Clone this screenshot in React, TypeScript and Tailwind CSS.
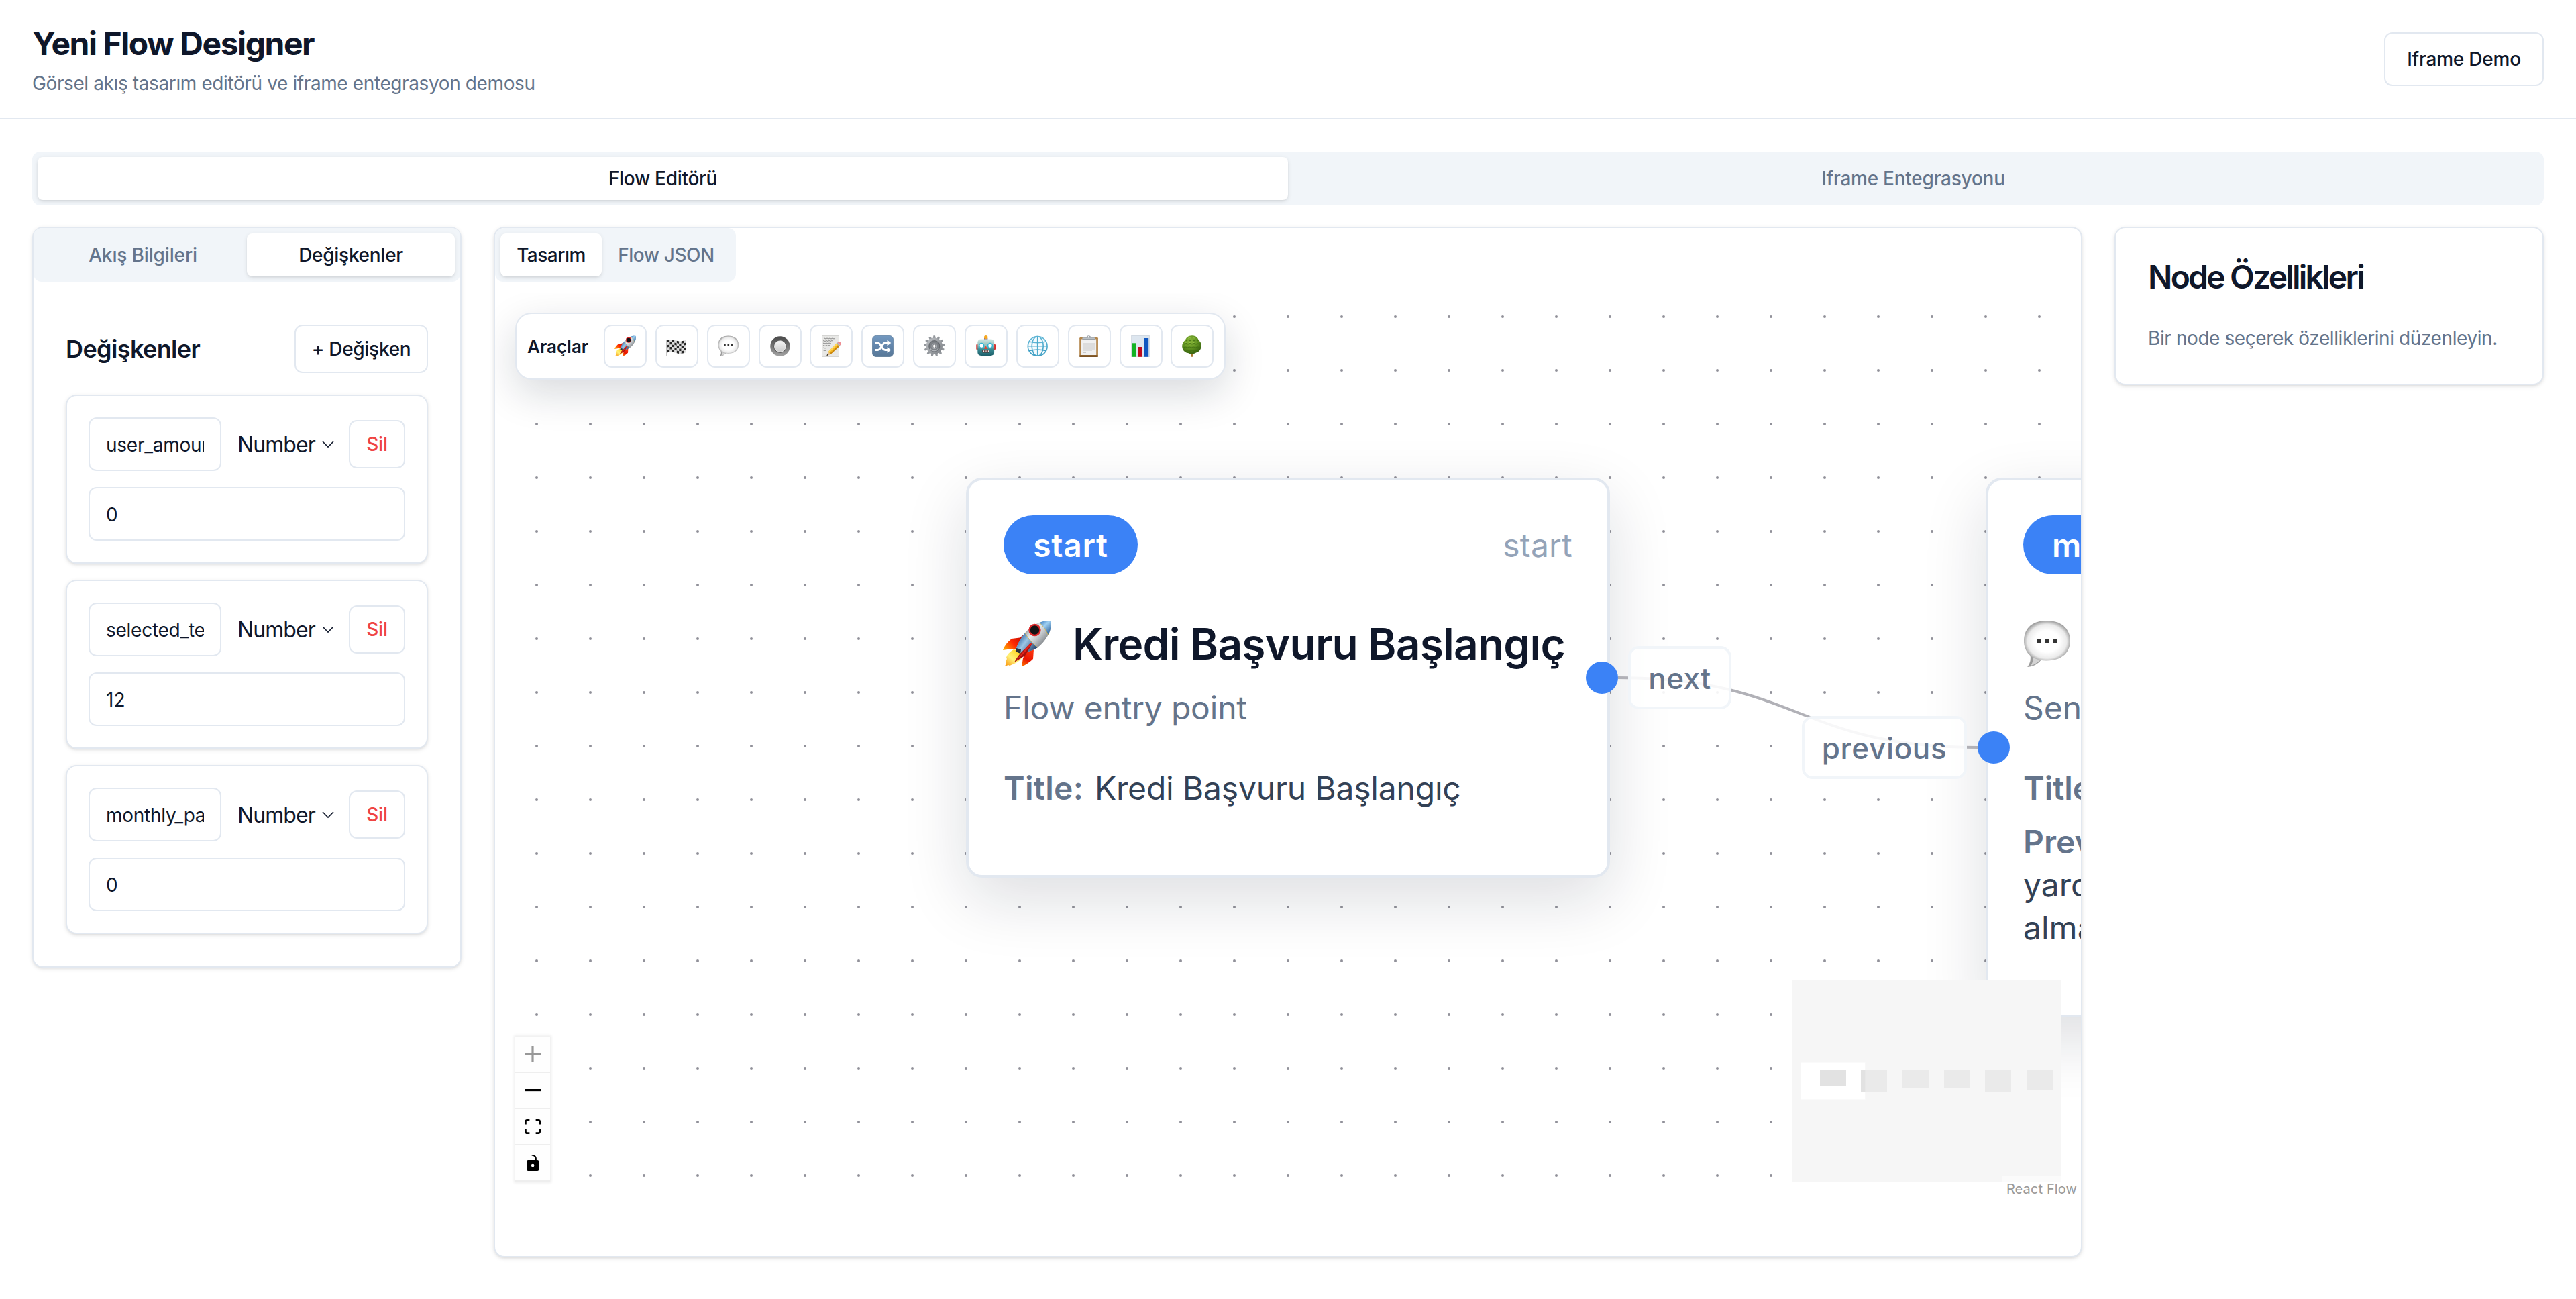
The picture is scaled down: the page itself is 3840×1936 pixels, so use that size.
import type { ReactNode } from "react";

/* ---------- Emoji-style glyphs ---------- */

function Rocket({ className, id }: { className: string; id: string }) {
  return (
    <svg viewBox="0 0 72 72" className={className}>
      <defs>
        <linearGradient id={id + "b"} x1="28" y1="18" x2="58" y2="44" gradientUnits="userSpaceOnUse">
          <stop offset="0" stopColor="#7d8790" />
          <stop offset=".35" stopColor="#e9ecee" />
          <stop offset=".6" stopColor="#c3c8cc" />
          <stop offset="1" stopColor="#6f7478" />
        </linearGradient>
        <linearGradient id={id + "n"} x1="56" y1="2" x2="72" y2="18" gradientUnits="userSpaceOnUse">
          <stop offset="0" stopColor="#3f7fc0" />
          <stop offset=".4" stopColor="#9fd0f2" />
          <stop offset="1" stopColor="#2b5f9a" />
        </linearGradient>
        <linearGradient id={id + "t"} x1="24" y1="30" x2="46" y2="46" gradientUnits="userSpaceOnUse">
          <stop offset="0" stopColor="#4c7db1" />
          <stop offset=".35" stopColor="#9cc6e6" />
          <stop offset="1" stopColor="#2f4f78" />
        </linearGradient>
        <linearGradient id={id + "l"} x1="28" y1="24" x2="2" y2="46" gradientUnits="userSpaceOnUse">
          <stop offset="0" stopColor="#c10800" />
          <stop offset=".5" stopColor="#ff2a00" />
          <stop offset="1" stopColor="#ffb000" />
        </linearGradient>
        <linearGradient id={id + "r"} x1="46" y1="44" x2="30" y2="70" gradientUnits="userSpaceOnUse">
          <stop offset="0" stopColor="#ff3a10" />
          <stop offset=".6" stopColor="#e81400" />
          <stop offset="1" stopColor="#ff7a00" />
        </linearGradient>
        <linearGradient id={id + "f"} x1="24" y1="46" x2="4" y2="70" gradientUnits="userSpaceOnUse">
          <stop offset="0" stopColor="#ffd21c" />
          <stop offset=".5" stopColor="#fff27a" />
          <stop offset="1" stopColor="#f98b00" />
        </linearGradient>
      </defs>
      <path d="M31 22 25 26.500 13 28Q3 36 0 45L13 43 21 43.500 26 36Z" fill={`url(#${id}l)`} />
      <path d="M46 44 45 58Q38 65 28 69.500L30 57 34 48Z" fill={`url(#${id}r)`} />
      <path d="M16 44Q6 50 5 56L6 58 4 61 5 64 3 69 8 67 10 68 17 65Q27 61 29 54L27 47Z" fill={`url(#${id}f)`} />
      <path d="M64 1.200Q70.500 .5 72 2.500 73 14 66 25 60 35 52 41 40 48 27 49L19.500 43Q24 31 31 22 43 5 64 1.200Z" fill={`url(#${id}b)`} />
      <path d="M33 19.500Q39 30 51.500 41.500 40 48 27 49L19.500 43Q24 30 33 19.500Z" fill={`url(#${id}t)`} />
      <path d="M64 1.200Q70.500 .5 72 2.500 72.500 13 67.500 22 62 10 54.500 4 59 2 64 1.200Z" fill={`url(#${id}n)`} />
      <path d="M54.500 4Q62 10 67.500 22M33 19.500Q39 30 51.500 41.500" fill="none" stroke="#d8b23a" strokeWidth=".8" />
      <circle cx="47.500" cy="15" r="8" fill="#151315" stroke="#dd282a" strokeWidth="2.400" />
      <path d="M20 42 27 44 26 50 19 47Z" fill="#2c3038" />
      <path d="M41 34.500 43.500 36 33 53 17 63Q23 51 33 43Z" fill="#a3120c" />
      <path d="M41 34.500 43.500 36 31 50 17 63Z" fill="#e3231a" />
    </svg>
  );
}

function Bubble({ className, id }: { className: string; id: string }) {
  return (
    <svg viewBox="0 0 72 72" className={className}>
      <defs>
        <radialGradient id={id} cx=".5" cy=".52" r=".53">
          <stop offset=".5" stopColor="#ffffff" />
          <stop offset=".8" stopColor="#ebebeb" />
          <stop offset="1" stopColor="#979797" />
        </radialGradient>
      </defs>
      <path d="M10 50Q13 62 6 70 20 69 28 58Z" fill="#9a9a9a" />
      <path d="M14 52Q16 62 11 68 20 66 29 56Z" fill="#d4d4d4" />
      <path d="M35 1C60 1 70 16 70 31S60 60.500 35 60.500 1 46 1 31 10 1 35 1Z" fill={`url(#${id})`} />
      <g fill="#333333">
        <circle cx="23.500" cy="31.500" r="3.300" />
        <circle cx="35.500" cy="31.500" r="3.300" />
        <circle cx="47.500" cy="31.500" r="3.300" />
      </g>
    </svg>
  );
}

const wave = (x: number) => Math.sin((x / 28) * Math.PI * 2) * 1.3;
const FLAG_CELLS = Array.from({ length: 40 }, (_, i) => {
  const c = i % 8;
  const r = Math.floor(i / 8);
  const x0 = 2 + c * 3.45;
  const x1 = x0 + 3.45;
  const y = 7.2 + r * 3.7;
  const a = y - wave(x0);
  const b = y - wave(x1);
  return { points: `${x0},${a} ${x1},${b} ${x1},${b + 3.7} ${x0},${a + 3.7}`, dark: (c + r) % 2 === 0 };
});

function Flag() {
  return (
    <svg viewBox="0 0 32 32" className="size-8">
      <path d="M1 6V30.500" stroke="#a8a8a8" strokeWidth="1.300" />
      {FLAG_CELLS.map((cell) => (
        <polygon key={cell.points} points={cell.points} fill={cell.dark ? "#262626" : "#dcdcdc"} />
      ))}
    </svg>
  );
}

function RadioGlyph() {
  return (
    <svg viewBox="0 0 32 32" className="size-8">
      <defs>
        <linearGradient id="radio-o" x1="0" y1="0" x2="0" y2="1">
          <stop offset="0" stopColor="#474747" />
          <stop offset="1" stopColor="#a3a3a3" />
        </linearGradient>
        <linearGradient id="radio-i" x1="0" y1="0" x2="0" y2="1">
          <stop offset="0" stopColor="#f4f4f4" />
          <stop offset="1" stopColor="#c9c9c9" />
        </linearGradient>
      </defs>
      <circle cx="15.900" cy="16" r="14.700" fill="url(#radio-o)" />
      <circle cx="15.900" cy="16.200" r="9.700" fill="#5c5c5c" />
      <circle cx="15.900" cy="16.200" r="8.300" fill="url(#radio-i)" stroke="#f3f3f3" strokeWidth="1" />
    </svg>
  );
}

function Memo() {
  return (
    <svg viewBox="0 0 32 32" className="size-8">
      <rect x="2" y="0" width="26" height="32" fill="#e8e8e6" />
      <rect x="2.300" y=".3" width="25.400" height="31.400" fill="none" stroke="#c9c9c7" strokeWidth=".6" />
      <path d="M5 4.500q1-1 2 0t2 0 2 0 2 0 2 0 2 0 2 0 2 0M4 8q1-1 2 0t2 0 2 0 2 0 2 0 2 0 2 0M4 11.500q1-1 2 0t2 0 2 0 2 0 2 0 2 0M4 15q1-1 2 0t2 0 2 0 2 0 2 0M4 18.500q1-1 2 0t2 0M4 22q1-1 2 0t2 0" fill="none" stroke="#7d7d7d" strokeWidth=".9" />
      <path d="M9.300 30.200 11.800 24 15.200 27.900Z" fill="#e6c08c" />
      <path d="M9.300 30.200 10.300 27.600 11.800 29.300Z" fill="#333" />
      <path d="M11.800 24 24 11.500 28.300 15.900 15.200 27.900Z" fill="#f3b51f" />
      <path d="M11.800 24 24 11.500 25.500 13 13 25.400Z" fill="#ffd75a" />
      <path d="M14.100 26.700 27 14.500 28.300 15.900 15.200 27.900Z" fill="#c78410" />
      <path d="M24 11.500 25.500 10.200 29.500 14.600 28.300 15.900Z" fill="#a9aeb2" />
      <path d="M25.500 10.200Q28 8 30 10.300T29.500 14.600Z" fill="#ee8d93" />
    </svg>
  );
}

function ShuffleGlyph() {
  return (
    <svg viewBox="0 0 32 32" className="size-8">
      <defs>
        <linearGradient id="shuf" x1="0" y1="0" x2="0" y2="1">
          <stop offset="0" stopColor="#7399c0" />
          <stop offset=".5" stopColor="#6285ab" />
          <stop offset="1" stopColor="#587897" />
        </linearGradient>
      </defs>
      <rect x=".3" y=".3" width="31.400" height="31.400" rx="6" fill="url(#shuf)" stroke="#4f7091" strokeWidth=".6" />
      <g fill="none" stroke="#fff" strokeWidth="2.800">
        <path d="M4.500 11H8.500C13.500 11 14.500 21.500 19.500 21.500H23" />
        <path d="M4.500 21.500H8.500C13.500 21.500 14.500 11 19.500 11H23" />
      </g>
      <path d="M22.500 6.700 28.300 11 22.500 15.300ZM22.500 17.200 28.300 21.500 22.500 25.800Z" fill="#fff" />
    </svg>
  );
}

const TEETH = Array.from({ length: 13 }, (_, i) => (i * 360) / 13);

function Gear() {
  return (
    <svg viewBox="0 0 32 32" className="size-8">
      <defs>
        <linearGradient id="gear" x1="0" y1="0" x2="1" y2="1">
          <stop offset="0" stopColor="#bfc2c6" />
          <stop offset="1" stopColor="#7c8085" />
        </linearGradient>
      </defs>
      {TEETH.map((a) => (
        <path key={a} d="M13.800 4.500 14.400 .3H17L17.800 4.500Z" fill="#92969b" transform={`rotate(${a} 15.800 15.700)`} />
      ))}
      <circle cx="15.800" cy="15.700" r="12.200" fill="url(#gear)" />
      <circle cx="15.800" cy="15.700" r="8" fill="#7d8186" stroke="#65696e" strokeWidth="1.200" />
      <path d="M9.500 19A7 7 0 0 0 22 19" fill="none" stroke="#aeb2b7" strokeWidth="1.500" />
      <circle cx="15.800" cy="15.700" r="4.300" fill="#a9adb3" />
      <ellipse cx="15.800" cy="15.700" rx="2.200" ry="2.900" fill="#fff" stroke="#5d6166" strokeWidth=".8" />
    </svg>
  );
}

function Robot() {
  return (
    <svg viewBox="0 0 32 32" className="size-8">
      <defs>
        <linearGradient id="bot" x1="0" y1="0" x2="0" y2="1">
          <stop offset="0" stopColor="#d3e8e3" />
          <stop offset=".4" stopColor="#8bbdbb" />
          <stop offset=".62" stopColor="#3a8a92" />
          <stop offset="1" stopColor="#1c5f6a" />
        </linearGradient>
      </defs>
      <rect x="1.300" y="13" width="3" height="8" rx="1" fill="#d9302c" />
      <rect x="27" y="13" width="3" height="8" rx="1" fill="#d9302c" />
      <rect x="13" y="3.800" width="5.400" height="3" rx="1" fill="#5b4a9c" />
      <circle cx="15.700" cy="2.800" r="2.700" fill="#f6a821" />
      <rect x="3.300" y="5.400" width="24.800" height="24.600" rx="5" fill="url(#bot)" />
      <circle cx="9.200" cy="15" r="3.400" fill="#fff" stroke="#2fb6d4" strokeWidth="1.500" />
      <circle cx="22" cy="15" r="3.400" fill="#fff" stroke="#2fb6d4" strokeWidth="1.500" />
      <path d="M15.600 15.500 18 20H13.200Z" fill="#e8412f" />
      <rect x="10.300" y="21.600" width="10.800" height="3.800" rx="1" fill="#5a2a28" />
      <path d="M11.200 22.200h1.800v2.600h-1.800zM13.800 22.200h1.800v2.600h-1.800zM16.400 22.200h1.800v2.600h-1.800zM19 22.200h1.400v2.600H19z" fill="#f2f2f2" />
    </svg>
  );
}

function Globe() {
  return (
    <svg viewBox="0 0 32 32" className="size-8">
      <defs>
        <linearGradient id="globe" x1="0" y1="0" x2="0" y2="1">
          <stop offset="0" stopColor="#5fb6d6" />
          <stop offset="1" stopColor="#3f9fc4" />
        </linearGradient>
      </defs>
      <g fill="none" stroke="url(#globe)" strokeWidth="1.600">
        <circle cx="15.700" cy="15.900" r="14.400" fill="#f4fbfe" />
        <ellipse cx="15.700" cy="15.900" rx="8.500" ry="14.400" />
        <path d="M1.400 15.800H30M3.200 9Q15.700 12.500 28.200 9M3.200 22.700Q15.700 19.200 28.200 22.700" />
      </g>
      <path d="M15.700 1.500V30.300" stroke="#4eabcd" strokeWidth="1.600" />
    </svg>
  );
}

function Clipboard() {
  return (
    <svg viewBox="0 0 32 32" className="size-8">
      <rect x="1.200" y="2.700" width="27.700" height="29.200" rx="1.500" fill="#b3854a" />
      <rect x="1.200" y="29.300" width="27.700" height="2.600" rx="1" fill="#7b5326" />
      <rect x="3.900" y="5.500" width="22.300" height="23.500" fill="#f0f0f0" />
      <path d="M6 9.500H13M6 12H24M6 14H24M6 16H24M6 18H24M6 20H24M6 22H20M6 25.500H11" stroke="#c9c9c9" strokeWidth="1" />
      <path d="M5.500 6.300V4Q5.500 3 7 3H11.500Q12 .2 14.900 .2T18.300 3H22.800Q24.300 3 24.300 4V6.300Z" fill="#9aa1a7" />
      <circle cx="14.900" cy="2.200" r="1.200" fill="#fff" />
      <path d="M5.500 4.200H24.300" stroke="#d5dade" strokeWidth=".8" />
    </svg>
  );
}

function ChartGlyph() {
  return (
    <svg viewBox="0 0 32 32" className="size-8">
      <rect x="1.700" y=".3" width="26.600" height="31.500" fill="#dde6ef" stroke="#c3ccd6" strokeWidth=".6" />
      <rect x="2.600" y="11.300" width="6.200" height="20.500" fill="#12b223" />
      <rect x="11.800" y="17" width="6.200" height="14.800" fill="#c0091c" />
      <rect x="21" y="4" width="6.200" height="27.800" fill="#0f56c0" />
    </svg>
  );
}

function Tree() {
  return (
    <svg viewBox="0 0 32 32" className="size-8">
      <defs>
        <radialGradient id="tree" cx=".42" cy=".3" r=".7">
          <stop offset="0" stopColor="#8ab83a" />
          <stop offset=".6" stopColor="#5d8f1f" />
          <stop offset="1" stopColor="#38630f" />
        </radialGradient>
      </defs>
      <path d="M13.500 25.500H17.500L17 31.700H14.500Z" fill="#a8762e" />
      <path d="M15.500 .2C21 0 24.500 3 25.500 6.500 28.500 9 30.500 12.500 29.500 17 29 21.500 26 24.500 22 25.500 18 28 13.500 28 10 26 5 25.500 1.800 21.500 1.300 17 .8 12.500 3 9 6 6.500 7.500 2.500 11 .3 15.500 .2Z" fill="url(#tree)" />
      <g fill="none" stroke="#3f6b12" strokeWidth="1.100" opacity=".8">
        <path d="M7 8q3-3 6 0 3-3 6 0 3-3 6 0M4 13q3-3 6 0 3-3 6 0 3-3 6 0 3-2 6 0M3 18.500q3-3 6 0 3-3 6 0 3-3 6 0 3-3 7 0M7 23.500q3-3 6 0 3-3 6 0 3-2 5 0" />
      </g>
      <g fill="none" stroke="#a5cf55" strokeWidth=".8" opacity=".8">
        <path d="M10 4.500q2-2 4-.5M17 4q2-1 4 .8M6 11q1.500-1.500 3-.8M12 10.800q1.500-1.500 3-.8M18 10.800q1.500-1.500 3-.8M5 16.300q1.500-1.500 3-.8M11 16.300q1.500-1.500 3-.8M17 16.300q1.500-1.500 3-.8" />
      </g>
    </svg>
  );
}

/* ---------- Data ---------- */

const TOOLS: { name: string; icon: ReactNode }[] = [
  { name: "start", icon: <Rocket className="size-8" id="rk-tool" /> },
  { name: "end", icon: <Flag /> },
  { name: "message", icon: <Bubble className="size-8" id="bb-tool" /> },
  { name: "button", icon: <RadioGlyph /> },
  { name: "form", icon: <Memo /> },
  { name: "condition", icon: <ShuffleGlyph /> },
  { name: "action", icon: <Gear /> },
  { name: "assistant", icon: <Robot /> },
  { name: "api", icon: <Globe /> },
  { name: "list", icon: <Clipboard /> },
  { name: "chart", icon: <ChartGlyph /> },
  { name: "tree", icon: <Tree /> },
];

const VARIABLES = [
  { name: "user_amount", value: "0" },
  { name: "selected_term", value: "12" },
  { name: "monthly_pay", value: "0" },
];

const MINI_NODES = [
  { x: 41, w: 39, h: 24 },
  { x: 102, w: 39, h: 32 },
  { x: 164, w: 39, h: 27 },
  { x: 226, w: 38, h: 27 },
  { x: 287, w: 39, h: 32 },
  { x: 349, w: 39, h: 30 },
];

/* ---------- Panels ---------- */

function VariableCard({ name, value }: { name: string; value: string }) {
  return (
    <div className="flex flex-col gap-6 rounded-2xl border-2 border-[#e2e8f0] bg-white p-8 shadow-[0_2px_6px_rgba(0,0,0,0.1),0_2px_4px_-2px_rgba(0,0,0,0.1)]">
      <div className="flex items-center gap-6">
        <div className="flex h-20 w-[198px] items-center rounded-xl border-2 border-[#e2e8f0] px-6 pt-[2px]">
          <span className="w-full overflow-hidden text-[28px] leading-10 tracking-[-0.26px] whitespace-nowrap">{name}</span>
        </div>
        <div className="flex w-[142px] items-center justify-between">
          <span className="pt-[2px] text-[32px] leading-[48px] tracking-[-0.9px]">Number</span>
          <svg viewBox="0 0 18 11" className="mr-[-2px] h-[11px] w-[18px]">
            <path d="M1 1 9 9 17 1" fill="none" stroke="#0f172a" strokeWidth="1.600" />
          </svg>
        </div>
        <button className="h-[72px] w-[84px] rounded-xl border-2 border-[#e2e8f0] text-[28px] font-medium tracking-[-0.17px] text-[#ef4444]">Sil</button>
      </div>
      <div className="flex h-20 items-center rounded-xl border-2 border-[#e2e8f0] px-6 pt-[2px] text-[28px]">{value}</div>
    </div>
  );
}

function VariablesPanel() {
  return (
    <section className="rounded-2xl border-2 border-[#e2e8f0] bg-white shadow-[0_2px_6px_rgba(0,0,0,0.1),0_2px_4px_-2px_rgba(0,0,0,0.1)]">
      <div className="grid h-20 grid-cols-2 rounded-xl bg-[#f1f5f9] p-2 text-[28px] font-medium">
        <button className="tracking-[-0.15px] text-[#64748b]">Akış Bilgileri</button>
        <button className="rounded-lg bg-white tracking-[-0.28px] shadow-[0_2px_6px_rgba(0,0,0,0.1),0_2px_4px_-2px_rgba(0,0,0,0.1)]">Değişkenler</button>
      </div>
      <div className="mt-4 flex flex-col gap-6 p-12">
        <div className="mb-2 flex items-center justify-between">
          <h3 className="text-[36px] leading-[56px] font-semibold tracking-[-0.62px]">Değişkenler</h3>
          <button className="h-[72px] w-[199px] rounded-xl border-2 border-[#e2e8f0] text-[28px] font-medium tracking-[-0.29px]">+ Değişken</button>
        </div>
        {VARIABLES.map((v) => (
          <VariableCard key={v.name} name={v.name} value={v.value} />
        ))}
      </div>
    </section>
  );
}

function FlowNode({ className, children }: { className: string; children: ReactNode }) {
  return (
    <article className={`absolute w-[960px] rounded-[24px] border-4 border-[#e2e8f0] bg-white p-[52px] text-[48px] leading-[64px] shadow-[0_32px_96px_rgba(15,23,42,0.14)] ${className}`}>
      {children}
    </article>
  );
}

function FlowCanvas() {
  return (
    <div className="relative mt-4 h-[1355px] overflow-hidden">
      <svg className="absolute inset-0 h-full w-full">
        <defs>
          <pattern id="dots" x="22" y="-4" width="80" height="80" patternUnits="userSpaceOnUse">
            <circle cx="40" cy="40" r="2" fill="#91919a" />
          </pattern>
        </defs>
        <rect width="100%" height="100%" fill="url(#dots)" />
      </svg>

      <FlowNode className="top-[276px] left-[702px] h-[596px]">
        <div className="flex items-center justify-between">
          <span className="flex h-[88px] w-[200px] items-center justify-center rounded-full bg-[#3b82f6] pt-px font-semibold tracking-[0.7px] text-white">start</span>
          <span className="pt-px tracking-[0.2px] text-[#94a3b8]">start</span>
        </div>
        <h4 className="mt-14 flex h-24 items-center text-[64px] font-semibold tracking-[-0.78px] whitespace-nowrap">
          <Rocket className="ml-[-1px] mr-[32px] size-[72px] shrink-0" id="rk-node" />
          Kredi Başvuru Başlangıç
        </h4>
        <p className="mt-[15px] tracking-[-0.19px] text-[#64748b]">Flow entry point</p>
        <p className="mt-14 flex text-[#334155]">
          <span className="w-[136px] font-semibold tracking-[0.3px] text-[#64748b]">Title:</span>
          <span className="tracking-[-0.2px]">Kredi Başvuru Başlangıç</span>
        </p>
      </FlowNode>

      <FlowNode className="top-[276px] left-[2222px] h-[804px]">
        <span className="flex h-[88px] w-[290px] items-center rounded-full bg-[#3b82f6] pt-px pl-[43px] font-semibold tracking-[0.7px] text-white">message</span>
        <h4 className="mt-14 flex h-24 items-center gap-7 text-[64px] font-semibold tracking-[-0.88px] whitespace-nowrap">
          <Bubble className="size-[72px] shrink-0" id="bb-node" />
          Mesaj
        </h4>
        <p className="mt-[15px] text-[#64748b]">Send message</p>
        <p className="mt-14 font-semibold text-[#64748b]">Title:</p>
        <p className="mt-4 text-[#334155]">
          <span className="font-semibold text-[#64748b]">Preview:</span>
          <br />
          yardımcı
          <br />
          almak
        </p>
      </FlowNode>

      <svg className="absolute inset-0 h-full w-full">
        <path d="M1674 574C1942 574 1942 678 2210 678" fill="none" stroke="#b1b1b7" strokeWidth="4" />
      </svg>
      <div className="absolute top-[550px] left-[1626px] size-12 rounded-full bg-[#3b82f6]" />
      <div className="absolute top-[654px] left-[2210px] size-12 rounded-full bg-[#3b82f6]" />
      <div className="absolute top-[527px] left-[1689px] flex h-[94px] w-[154px] items-center justify-center rounded-2xl border-4 border-[#f1f5f9] bg-white/90 pt-[2px] text-[44px] font-medium tracking-[0.5px] text-[#64748b]">
        next
      </div>
      <div className="absolute top-[631px] left-[1948px] flex h-[94px] w-[246px] items-center justify-center rounded-2xl border-4 border-[#f1f5f9] bg-white/90 pt-[2px] text-[44px] font-medium tracking-[0.64px] text-[#64748b]">
        previous
      </div>

      {/* toolbox */}
      <div className="absolute top-[30px] left-[30px] flex h-[100px] items-center rounded-[24px] border-2 border-[#e2e8f0] bg-white px-4 shadow-[0_20px_60px_rgba(15,23,42,0.16)]">
        <span className="w-[114px] text-[26px] font-semibold">Araçlar</span>
        <div className="flex gap-[12.870px]">
          {TOOLS.map((tool) => (
            <button key={tool.name} aria-label={tool.name} className="flex size-16 items-center justify-center rounded-xl border-2 border-[#e2e8f0] bg-white">
              {tool.icon}
            </button>
          ))}
        </div>
      </div>

      {/* zoom controls */}
      <div className="absolute bottom-[30px] left-[30px] flex w-[52px] flex-col gap-[2px] bg-[#eeeeee] pb-[2px] shadow-[0_0_4px_2px_rgba(0,0,0,0.07)]">
        <button aria-label="zoom in" className="flex size-[52px] items-center justify-center bg-[#fefefe]">
          <svg viewBox="0 0 32 32" className="size-6" fill="#000" fillOpacity=".4">
            <path d="M32 18.133H18.133V32h-4.266V18.133H0v-4.266h13.867V0h4.266v13.867H32z" />
          </svg>
        </button>
        <button aria-label="zoom out" className="flex size-[52px] items-center justify-center bg-[#fefefe]">
          <svg viewBox="0 0 32 5" className="w-6">
            <path d="M0 0h32v4.200H0z" />
          </svg>
        </button>
        <button aria-label="fit view" className="flex size-[52px] items-center justify-center bg-[#fefefe]">
          <svg viewBox="0 0 32 30" className="w-6">
            <path d="M3.692 4.630c0-.53.4-.938.939-.938h5.215V0H4.708C2.130 0 0 2.054 0 4.630v5.216h3.692V4.631zM27.354 0h-5.200v3.692h5.170c.53 0 .984.400.984.939v5.215H32V4.631A4.624 4.624 0 0027.354 0zm.954 24.830c0 .532-.4.940-.939.940h-5.215v3.768h5.215c2.577 0 4.631-2.130 4.631-4.707v-5.139h-3.692v5.139zm-23.677.940c-.531 0-.939-.4-.939-.940v-5.138H0v5.139c0 2.577 2.130 4.707 4.708 4.707h5.138V25.770H4.631z" />
          </svg>
        </button>
        <button aria-label="lock" className="flex size-[52px] items-center justify-center bg-[#fefefe]">
          <svg viewBox="0 0 25 32" className="h-6">
            <path d="M21.333 10.667H19.810V7.619C19.810 3.429 16.380 0 12.190 0c-4.114 1.828-1.370 2.133.305 2.438 1.676.305 4.420 2.590 4.420 5.181v3.048H3.047A3.056 3.056 0 000 13.714v15.238A3.056 3.056 0 003.048 32h18.285a3.056 3.056 0 003.048-3.048V13.714a3.056 3.056 0 00-3.048-3.047zM12.190 24.533a3.056 3.056 0 01-3.047-3.047 3.056 3.056 0 013.047-3.048 3.056 3.056 0 013.048 3.048 3.056 3.056 0 01-3.048 3.047z" />
          </svg>
        </button>
      </div>

      {/* minimap */}
      <svg viewBox="0 0 400 300" className="absolute right-[30px] bottom-[30px] h-[300px] w-[400px] bg-white">
        {MINI_NODES.map((n) => (
          <rect key={n.x} x={n.x} y="134" width={n.w} height={n.h} fill="#e2e2e2" />
        ))}
        <path fillRule="evenodd" d="M0 0H400V300H0ZM12.500 122.500V177.500H108.300V122.500Z" fill="#f0f0f0" fillOpacity=".6" />
      </svg>
      <div className="absolute right-0 bottom-0 flex h-[38px] w-[117px] items-center justify-center bg-white/50 text-[20px] leading-[30px] tracking-[0.13px] text-[#999999]">
        React Flow
      </div>
    </div>
  );
}

export default function App() {
  return (
    <div className="h-[1936px] w-[3840px] overflow-hidden bg-white font-['Inter',sans-serif] text-[#0f172a]">
      <header className="flex h-[178px] items-center justify-between border-b-2 border-[#e2e8f0] px-12">
        <div>
          <h1 className="h-16 pt-px text-[48px] leading-[64px] font-bold tracking-[-1.45px]">Yeni Flow Designer</h1>
          <p className="mt-2 text-[28px] leading-10 tracking-[-0.39px] text-[#64748b]">Görsel akış tasarım editörü ve iframe entegrasyon demosu</p>
        </div>
        <button className="h-20 w-[238px] rounded-xl border-2 border-[#e2e8f0] text-[28px] font-medium tracking-[-0.22px]">Iframe Demo</button>
      </header>

      <main className="px-12 pt-12">
        <div className="grid h-20 grid-cols-2 rounded-xl bg-[#f1f5f9] p-2 text-[28px] font-medium">
          <button className="rounded-lg bg-white tracking-[-0.3px] shadow-[0_2px_6px_rgba(0,0,0,0.1),0_2px_4px_-2px_rgba(0,0,0,0.1)]">Flow Editörü</button>
          <button className="tracking-[-0.25px] text-[#64748b]">Iframe Entegrasyonu</button>
        </div>

        <div className="mt-8 grid grid-cols-[640px_2368px_640px] items-start gap-12">
          <VariablesPanel />

          <section className="h-[1536px] overflow-hidden rounded-2xl border-2 border-[#e2e8f0] bg-white shadow-[0_2px_6px_rgba(0,0,0,0.1),0_2px_4px_-2px_rgba(0,0,0,0.1)]">
            <div className="flex h-20 w-[359px] rounded-xl bg-[#f1f5f9] p-2 text-[28px] font-medium">
              <button className="w-[151px] rounded-lg bg-white tracking-[-0.5px] shadow-[0_2px_6px_rgba(0,0,0,0.1),0_2px_4px_-2px_rgba(0,0,0,0.1)]">Tasarım</button>
              <button className="flex-1 tracking-[-0.42px] whitespace-nowrap text-[#64748b]">Flow JSON</button>
            </div>
            <FlowCanvas />
          </section>

          <section className="rounded-2xl border-2 border-[#e2e8f0] bg-white p-12 shadow-[0_2px_6px_rgba(0,0,0,0.1),0_2px_4px_-2px_rgba(0,0,0,0.1)]">
            <h3 className="h-12 pt-px text-[48px] leading-[48px] font-semibold tracking-[-2.8px]">Node Özellikleri</h3>
            <p className="mt-12 text-[28px] leading-10 tracking-[-0.41px] text-[#64748b]">Bir node seçerek özelliklerini düzenleyin.</p>
          </section>
        </div>
      </main>
    </div>
  );
}
